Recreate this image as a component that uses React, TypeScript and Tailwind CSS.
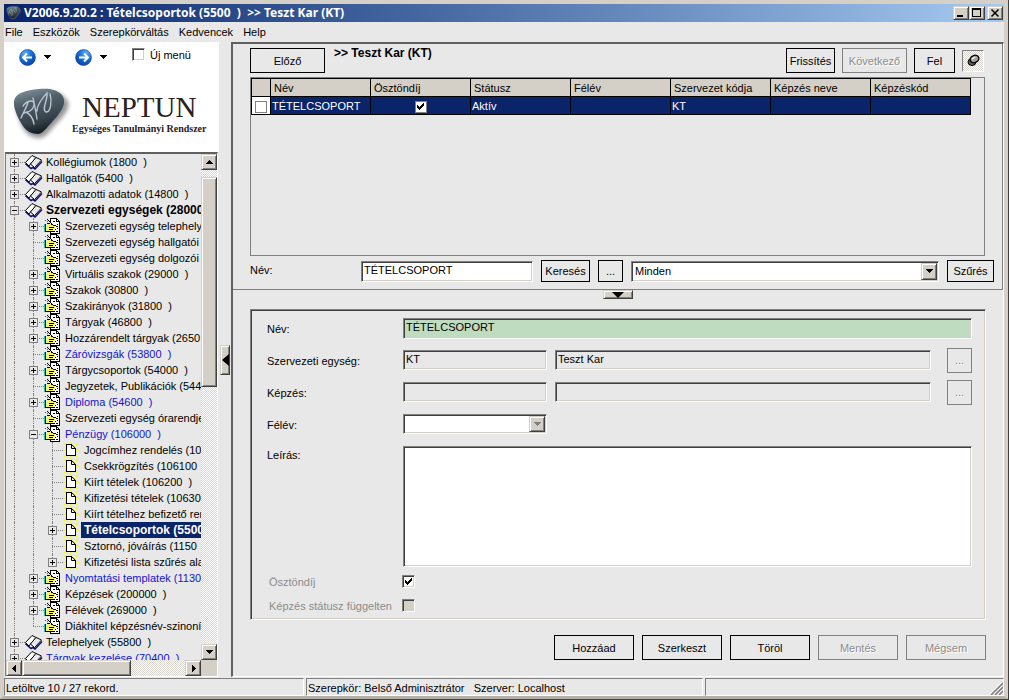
import type { ReactNode } from 'react';
import { clsx } from 'clsx';

type TreeIcon = 'book' | 'form' | 'page';

interface TreeRow {
  label: string;
  level: 0 | 1 | 2;
  toggle?: '+' | '-';
  blue?: boolean;
  bold?: boolean;
  selected?: boolean;
  last?: boolean; // last child of its branch
}

const treeRows: TreeRow[] = [
  { label: 'Kollégiumok (1800  )', level: 0, toggle: '+' },
  { label: 'Hallgatók (5400  )', level: 0, toggle: '+' },
  { label: 'Alkalmazotti adatok (14800  )', level: 0, toggle: '+' },
  { label: 'Szervezeti egységek (28000  )', level: 0, toggle: '-', bold: true },
  { label: 'Szervezeti egység telephelyei', level: 1, toggle: '+' },
  { label: 'Szervezeti egység hallgatói (29400  )', level: 1 },
  { label: 'Szervezeti egység dolgozói (28400  )', level: 1 },
  { label: 'Virtuális szakok (29000  )', level: 1, toggle: '+' },
  { label: 'Szakok (30800  )', level: 1, toggle: '+' },
  { label: 'Szakirányok (31800  )', level: 1, toggle: '+' },
  { label: 'Tárgyak (46800  )', level: 1, toggle: '+' },
  { label: 'Hozzárendelt tárgyak (2650', level: 1, toggle: '+' },
  { label: 'Záróvizsgák (53800  )', level: 1, blue: true },
  { label: 'Tárgycsoportok (54000  )', level: 1, toggle: '+' },
  { label: 'Jegyzetek, Publikációk (54400  )', level: 1 },
  { label: 'Diploma (54600  )', level: 1, toggle: '+', blue: true },
  { label: 'Szervezeti egység órarendje', level: 1 },
  { label: 'Pénzügy (106000  )', level: 1, toggle: '-', blue: true },
  { label: 'Jogcímhez rendelés (106050  )', level: 2 },
  { label: 'Csekkrögzítés (106100', level: 2 },
  { label: 'Kiírt tételek (106200  )', level: 2 },
  { label: 'Kifizetési tételek (106300  )', level: 2 },
  { label: 'Kiírt tételhez befizető rendelése', level: 2 },
  { label: 'Tételcsoportok (5500  )', level: 2, toggle: '+', bold: true, selected: true },
  { label: 'Sztornó, jóváírás (1150', level: 2 },
  { label: 'Kifizetési lista szűrés alapján', level: 2, toggle: '+', last: true },
  { label: 'Nyomtatási templatek (113000  )', level: 1, toggle: '+', blue: true },
  { label: 'Képzések (200000  )', level: 1, toggle: '+' },
  { label: 'Félévek (269000  )', level: 1, toggle: '+' },
  { label: 'Diákhitel képzésnév-szinonímák', level: 1, last: true },
  { label: 'Telephelyek (55800  )', level: 0, toggle: '+' },
  { label: 'Tárgyak kezelése (70400  )', level: 0, toggle: '+', blue: true },
];

const iconByLevel: TreeIcon[] = ['book', 'form', 'page'];
const columns = ['Név', 'Ösztöndíj', 'Státusz', 'Félév', 'Szervezet kódja', 'Képzés neve', 'Képzéskód'];
const menus = ['File', 'Eszközök', 'Szerepkörváltás', 'Kedvencek', 'Help'];

const sunken =
  'border border-t-[#808080] border-l-[#808080] border-r-white border-b-white shadow-[inset_1px_1px_0_#404040,inset_-1px_-1px_0_#d4d0c8]';
const raised =
  'bg-[#d4d0c8] border border-t-[#d4d0c8] border-l-[#d4d0c8] border-r-[#404040] border-b-[#404040] shadow-[inset_1px_1px_0_#fff,inset_-1px_-1px_0_#808080]';
const checker = 'bg-[repeating-conic-gradient(#ffffff_0_25%,#d9d6cf_0_50%)] bg-[length:2px_2px]';

/* ─── Icons ─────────────────────────────────────────────────────────── */

function Arrow({ dir, className }: { dir: 'up' | 'down' | 'left' | 'right'; className?: string }) {
  const paths = {
    up: 'M0 5h7v-1h-1v-1h-1v-1h-1v-1h-1v1h-1v1h-1v1h-1z',
    down: 'M0 1h7v1h-1v1h-1v1h-1v1h-1v-1h-1v-1h-1v-1h-1z',
    left: 'M5 0v7h-1v-1h-1v-1h-1v-1h-1v-1h1v-1h1v-1h1v-1z',
    right: 'M2 0v7h1v-1h1v-1h1v-1h1v-1h-1v-1h-1v-1h-1v-1z',
  };
  return (
    <svg width="7" height="7" viewBox="0 0 7 7" fill="currentColor" shapeRendering="crispEdges" className={className}>
      <path d={paths[dir]} />
    </svg>
  );
}

function NavCircle({ flip }: { flip?: boolean }) {
  return (
    <svg width="17" height="17" viewBox="0 0 17 17" className={clsx(flip && '-scale-x-100')}>
      <defs>
        <radialGradient id="ball" cx="0.35" cy="0.25" r="0.8">
          <stop offset="0" stopColor="#5fb0f5" />
          <stop offset="0.55" stopColor="#1568d2" />
          <stop offset="1" stopColor="#0b3f9c" />
        </radialGradient>
      </defs>
      <circle cx="8.5" cy="8.5" r="8" fill="url(#ball)" stroke="#1c4f9f" strokeWidth="0.6" />
      <path d="M13 8.500H4.500M8 4.500l-4 4 4 4" fill="none" stroke="#fff" strokeWidth="2" />
    </svg>
  );
}

function Stone({ size }: { size: number }) {
  return (
    <svg width={size} height={size} viewBox="0 0 60 60" className="shrink-0">
      <defs>
        <linearGradient id="stone" x1="0.3" y1="0" x2="0.6" y2="1">
          <stop offset="0" stopColor="#7c8d99" />
          <stop offset="0.3" stopColor="#4f5f6a" />
          <stop offset="0.7" stopColor="#36424b" />
          <stop offset="1" stopColor="#10161a" />
        </linearGradient>
        <filter id="soft" x="-20%" y="-20%" width="140%" height="140%">
          <feGaussianBlur stdDeviation="2" />
        </filter>
      </defs>
      <path
        d="M5 22C8 10 20 9 32 8s20 2 24 10c2 7-5 15-13 23-6 7-10 13-16 13-8 0-14-5-18-14-2-6-5-12-4-18z"
        fill="#666"
        opacity="0.7"
        filter="url(#soft)"
      />
      <path
        d="M2 17C3 9 14 6 27 5c9-1 17 0 22 5 4 4 4 9 1 15-3 5-6 9-10 13-5 5-8 11-14 12-6 0-12-3-15-8C7 36 1 25 2 17z"
        fill="url(#stone)"
      />
      <path
        d="M9 34c2-5 6-11 7-16M11 22c4-6 12-7 11-1s-6 7-10 8M14 28c4 2 7 6 8 12M21 14c2 8 3 15 4 21M25 27c0-6 6-14 10-18 1 7-6 17-1 19 5 1 6-12 4-18"
        fill="none"
        stroke="#b9c3ca"
        strokeWidth="1.4"
        strokeLinecap="round"
      />
    </svg>
  );
}

function NodeIcon({ kind }: { kind: TreeIcon }) {
  if (kind === 'book') {
    return (
      <svg width="18" height="16" viewBox="0 0 18 16" className="shrink-0">
        <path d="M0.500 9.500L6 14.500l2-1 2 1.500L17 7.500" fill="none" stroke="#14146e" strokeWidth="1.600" />
        <path d="M0.500 8.500L7 1.500l4 2L5.500 10 4 12z" fill="#fff" stroke="#000" />
        <path d="M5.500 10L11 3.500l5.500 2.500L9.500 13.500z" fill="#fff" stroke="#000" />
        <path d="M7.500 10l5-5M9.500 11l5-5" stroke="#b0b0b0" strokeWidth="0.700" />
      </svg>
    );
  }
  if (kind === 'form') {
    return (
      <svg width="18" height="16" viewBox="0 0 18 16" shapeRendering="crispEdges" className="shrink-0">
        <path d="M6.500 .5h6l3 3v12h-9z" fill="#fff" stroke="#000" />
        <path d="M12.500 0v3.500h3" fill="none" stroke="#000" />
        <path d="M9 3.500h2M13 6.500h1M12 8.500h2M13 10.500h1M9 13.500h2M12 13.500h2M11 11.500h1" stroke="#000" />
        <path d="M0 6h1v8H0z" fill="#00c8d8" />
        <path d="M1 7h2l2-2h2l4 3v3l-2 3H1z" fill="#f8f464" />
        <path d="M1.500 6v8M3 5.500h3M7 6.500h2M9 7.500h3M5 9.500h5M5 11.500h4M2 13.500h7" fill="none" stroke="#000" />
        <path d="M3 1h1v1h1v1h1v1h1v1h1v1h-1v-1h-1v-1h-1v-1h-1v-1h-1z" fill="#000" />
        <path d="M1 2h1v1H1zM3 3h1v1H3z" fill="#c03020" />
      </svg>
    );
  }
  return (
    <svg width="18" height="16" viewBox="0 0 18 16" className="shrink-0">
      <path d="M1 1l13 14M1 15L15 1M8 0v16M0 8h16" stroke="#f7f71c" strokeWidth="1.500" />
      <path d="M3.500 2.500h5l4 4v7h-9z" fill="#fff" stroke="#000" shapeRendering="crispEdges" />
      <path d="M8.500 2.500v4h4" fill="none" stroke="#000" />
    </svg>
  );
}

function Pin() {
  return (
    <svg width="13" height="13" viewBox="0 0 13 13">
      <ellipse cx="5" cy="8" rx="4" ry="3.5" fill="#606060" stroke="#000" />
      <ellipse cx="7.5" cy="5" rx="4.5" ry="3.5" fill="#a0a0a0" stroke="#000" strokeWidth="1.4" transform="rotate(-25 7.5 5)" />
      <path d="M5 5l3-2" stroke="#fff" strokeWidth="1.3" />
    </svg>
  );
}

/* ─── Controls ──────────────────────────────────────────────────────── */

function Button({ children, className, disabled }: { children: ReactNode; className: string; disabled?: boolean }) {
  return (
    <button
      type="button"
      disabled={disabled}
      className={clsx(
        'shrink-0 border text-center whitespace-nowrap',
        disabled ? 'border-[#808080] text-[#8c8c8c] [text-shadow:1px_1px_0_#fff]' : 'border-black',
        className,
      )}
    >
      {children}
    </button>
  );
}

interface CheckProps {
  id?: string;
  label?: string;
  checked?: boolean;
  disabled?: boolean;
  flat?: boolean;
}

function Check({ id, label, checked, disabled, flat }: CheckProps) {
  return (
    <span className="inline-grid shrink-0 place-items-center align-middle">
      <input
        id={id}
        type="checkbox"
        aria-label={label}
        defaultChecked={checked}
        disabled={disabled}
        className={clsx(
          'peer col-start-1 row-start-1 appearance-none',
          flat ? 'size-3 border border-[#808080]' : 'size-[13px]',
          !flat && sunken,
          disabled ? 'bg-[#d4d0c8]' : 'bg-white',
        )}
      />
      <svg
        width="7"
        height="7"
        viewBox="0 0 7 7"
        shapeRendering="crispEdges"
        className="pointer-events-none invisible col-start-1 row-start-1 peer-checked:visible"
      >
        <path d="M0 2v3h1v1h1v1h1v-1h1v-1h1v-1h1v-1h1v-3h-1v1h-1v1h-1v1h-1v1h-1v-1h-1v-1z" fill="#000" />
      </svg>
    </span>
  );
}

interface SelectProps {
  id?: string;
  label?: string;
  value: string;
  disabled?: boolean;
  className: string;
}

function Select({ id, label, value, disabled, className }: SelectProps) {
  return (
    <span className={clsx('relative block', className)}>
      <select
        id={id}
        aria-label={label}
        disabled={disabled}
        className={clsx('h-full w-full appearance-none bg-white pr-5 pl-[3px] opacity-100', sunken)}
      >
        <option>{value}</option>
      </select>
      <span
        className={clsx(
          'pointer-events-none absolute inset-y-[2px] right-[2px] flex w-4 items-center justify-center',
          raised,
          disabled && 'text-[#808080]',
        )}
      >
        <Arrow dir="down" />
      </span>
    </span>
  );
}

function Field({ id, label, value = '', className }: { id?: string; label?: string; value?: string; className: string }) {
  return (
    <input
      id={id}
      type="text"
      aria-label={label}
      defaultValue={value}
      className={clsx('min-w-0 pb-[2px] pl-[2px] outline-none', sunken, className)}
    />
  );
}

/* ─── Left side ─────────────────────────────────────────────────────── */

function TreeItem({ row }: { row: TreeRow }) {
  return (
    <li className="flex h-4">
      {Array.from({ length: row.level }, (_, i) => (
        <span key={i} className="flex w-[19px] shrink-0 pl-2">
          <span className="border-l border-dotted border-[#808080]" />
        </span>
      ))}
      <span className="relative w-[19px] shrink-0">
        <span
          className={clsx(
            'absolute top-0 left-2 border-l border-dotted border-[#808080]',
            row.last ? 'h-2' : 'h-4',
          )}
        />
        <span className="absolute top-2 right-0 left-2 border-t border-dotted border-[#808080]" />
        {row.toggle && (
          <button
            type="button"
            aria-label={row.label}
            className="absolute top-1 left-1 size-[9px] border border-[#808080] bg-[#e8e8e8]"
          >
            <svg width="7" height="7" viewBox="0 0 7 7" shapeRendering="crispEdges">
              <path d={row.toggle === '+' ? 'M1 3h5v1H1zM3 1h1v5H3z' : 'M1 3h5v1H1z'} />
            </svg>
          </button>
        )}
      </span>
      <NodeIcon kind={iconByLevel[row.level]} />
      <a
        href="#"
        className={clsx(
          'grow pr-1 pl-[3px] leading-4 whitespace-pre',
          row.blue && 'text-[#1414d0]',
          row.bold && 'text-[12px] font-bold',
          row.selected && 'bg-[#0a246a] text-white',
        )}
      >
        {row.label}
      </a>
    </li>
  );
}

function ScrollButton({ dir }: { dir: 'up' | 'down' | 'left' | 'right' }) {
  return (
    <button
      type="button"
      aria-label={dir}
      className={clsx('flex size-4 shrink-0 items-center justify-center', raised)}
    >
      <Arrow dir={dir} />
    </button>
  );
}

function Sidebar() {
  return (
    <aside className="flex w-[215px] shrink-0 flex-col">
      <div className="bg-white pb-2">
        <div className="flex h-[30px] items-center pl-[15px]">
          <button type="button" aria-label="Vissza" className="flex items-center gap-2">
            <NavCircle />
            <Arrow dir="down" />
          </button>
          <button type="button" aria-label="Előre" className="ml-6 flex items-center gap-2">
            <NavCircle flip />
            <Arrow dir="down" />
          </button>
          <label className="ml-[25px] flex items-center gap-[5px] pb-[5px]">
            <Check />
            Új menü
          </label>
        </div>
        <div className="flex pt-3 pl-2">
          <Stone size={60} />
          <div className="pt-[9px] font-['Liberation_Serif',serif] whitespace-nowrap text-[#2a211c]">
            <p className="pl-[10px] text-[29px] leading-[29px]">NEPTUN</p>
            <p className="text-[10px] leading-[14px] font-bold">Egységes Tanulmányi Rendszer</p>
          </div>
        </div>
      </div>

      <div className="mx-px flex min-h-0 flex-1 flex-col border border-t-2 border-[#808080] border-t-[#606060] border-r-white border-b-white">
        <div className="flex min-h-0 flex-1">
          <ul className="min-w-0 flex-1 overflow-hidden">
            {treeRows.map((row) => (
              <TreeItem key={row.label} row={row} />
            ))}
          </ul>
          <div className={clsx('flex w-4 flex-col', checker)}>
            <ScrollButton dir="up" />
            <div className="flex-1 pt-[7px]">
              <div className={clsx('h-[45%]', raised)} />
            </div>
            <ScrollButton dir="down" />
          </div>
        </div>
        <div className="flex h-4 bg-[#d4d0c8] pr-4">
          <ScrollButton dir="left" />
          <div className={clsx('flex flex-1', checker)}>
            <div className={clsx('w-2/3', raised)} />
          </div>
          <ScrollButton dir="right" />
        </div>
      </div>
    </aside>
  );
}

/* ─── Right side ────────────────────────────────────────────────────── */

function RecordTable() {
  return (
    <div className="mr-[17px] min-h-0 flex-1 border border-[#808080]">
      <table className="w-[720px] table-fixed border-separate border-spacing-0 border-t border-l border-black">
        <colgroup>
          <col className="w-[19px]" />
          {columns.map((name) => (
            <col key={name} className="w-[100px]" />
          ))}
        </colgroup>
        <thead className="bg-[#d4d0c8]">
          <tr className="h-[18px]">
            <th className="border-r border-b border-black p-0" />
            {columns.map((name) => (
              <th key={name} className="border-r border-b border-black p-0 pl-[3px] text-left leading-4 font-normal">
                {name}
              </th>
            ))}
          </tr>
        </thead>
        <tbody className="bg-[#0a246a] text-white">
          <tr className="h-[18px]">
            <td className="border-r border-b border-black bg-white p-0 text-center leading-4">
              <Check flat label="Kijelölés" />
            </td>
            <td className="border-r border-b border-black p-0 pl-px leading-4">TÉTELCSOPORT</td>
            <td className="border-r border-b border-black p-0 text-center leading-4">
              <Check flat checked label="Ösztöndíj" />
            </td>
            <td className="border-r border-b border-black p-0 pl-px leading-4">Aktív</td>
            <td className="border-r border-b border-black p-0" />
            <td className="border-r border-b border-black p-0 pl-px leading-4">KT</td>
            <td className="border-r border-b border-black p-0" />
            <td className="border-r border-b border-black p-0" />
          </tr>
        </tbody>
      </table>
    </div>
  );
}

function ListPane() {
  return (
    <section className="flex min-h-0 flex-1 flex-col gap-1 border-r border-b border-[#808080] pt-1 pb-[7px] pl-[17px]">
      <div className="flex h-[25px] items-center gap-[7px] pr-[18px]">
        <Button className="h-[25px] w-[75px]">Előző</Button>
        <h1 className="grow self-start pl-[2px] text-[12px] leading-[10px] font-bold">&gt;&gt; Teszt Kar (KT)</h1>
        <Button className="h-[25px] w-[49px]">Frissítés</Button>
        <Button className="h-[25px] w-[65px]" disabled>
          Következő
        </Button>
        <Button className="h-[25px] w-[41px]">Fel</Button>
        <button
          type="button"
          aria-label="Rögzítés"
          className={clsx(
            'flex size-[22px] items-center justify-center border border-t-[#808080] border-l-[#808080] border-r-white border-b-white',
            checker,
          )}
        >
          <Pin />
        </button>
      </div>

      <RecordTable />

      <div className="flex h-[22px] items-center gap-2 pr-2">
        <label htmlFor="search" className="w-[103px] shrink-0 pb-[2px]">
          Név:
        </label>
        <Field id="search" value="TÉTELCSOPORT" className="h-[21px] w-[172px] shrink-0 bg-white" />
        <Button className="h-[22px] w-[49px]">Keresés</Button>
        <Button className="h-[22px] w-[25px]">...</Button>
        <Select label="Szűrő" value="Minden" className="h-[21px] flex-1" />
        <Button className="h-[22px] w-[47px]">Szűrés</Button>
      </div>
    </section>
  );
}

function DetailPane() {
  return (
    <section className="px-[17px] pb-4">
      <div className={clsx('flex flex-col gap-3 pt-2 pr-[13px] pb-[7px] pl-4', sunken)}>
        <div className="flex h-5 items-center">
          <label htmlFor="name" className="w-[136px] shrink-0 pt-px">
            Név:
          </label>
          <Field id="name" value="TÉTELCSOPORT" className="h-[21px] flex-1 bg-[#c0dcc0]" />
        </div>
        <div className="flex h-5 items-center gap-2">
          <label htmlFor="unit" className="w-32 shrink-0 pt-px">
            Szervezeti egység:
          </label>
          <Field id="unit" value="KT" className="h-5 w-36 bg-[#e8e8e8]" />
          <Field label="Szervezeti egység neve" value="Teszt Kar" className="mr-2 h-5 flex-1 bg-[#e8e8e8]" />
          <Button className="h-[25px] w-[25px]" disabled>
            ...
          </Button>
        </div>
        <div className="flex h-5 items-center gap-2">
          <label htmlFor="training" className="w-32 shrink-0 pt-px">
            Képzés:
          </label>
          <Field id="training" className="h-5 w-36 bg-[#e8e8e8]" />
          <Field label="Képzés neve" className="mr-2 h-5 flex-1 bg-[#e8e8e8]" />
          <Button className="h-[25px] w-[25px]" disabled>
            ...
          </Button>
        </div>
        <div className="flex h-5 items-center">
          <label htmlFor="term" className="w-[136px] shrink-0 pt-px">
            Félév:
          </label>
          <Select id="term" value="" disabled className="h-5 w-36" />
        </div>
        <div className="flex">
          <label htmlFor="description" className="w-[136px] shrink-0 pt-px">
            Leírás:
          </label>
          <textarea id="description" className={clsx('h-[121px] flex-1 resize-none bg-white outline-none', sunken)} />
        </div>
        <div className="-mt-1 flex flex-col gap-[11px] pl-[2px] text-[#8c8c8c]">
          <div className="flex h-[13px] items-center">
            <label htmlFor="grant" className="w-[133px]">
              Ösztöndíj
            </label>
            <Check id="grant" checked />
          </div>
          <div className="flex h-[13px] items-center">
            <label htmlFor="independent" className="w-[133px]">
              Képzés státusz függelten
            </label>
            <Check id="independent" disabled />
          </div>
        </div>
      </div>
      <div className="flex justify-end gap-2 pt-[15px]">
        <Button className="h-[25px] w-20">Hozzáad</Button>
        <Button className="h-[25px] w-20">Szerkeszt</Button>
        <Button className="h-[25px] w-20">Töröl</Button>
        <Button className="h-[25px] w-20" disabled>
          Mentés
        </Button>
        <Button className="h-[25px] w-20" disabled>
          Mégsem
        </Button>
      </div>
    </section>
  );
}

/* ─── Window ────────────────────────────────────────────────────────── */

function TitleBar() {
  return (
    <header className="flex h-[18px] shrink-0 items-center bg-linear-to-r from-[#0a246a] to-[#a6caf0] pr-px pl-[2px] text-white">
      <Stone size={16} />
      <span className="grow pl-[2px] font-['Noto_Sans',sans-serif] text-[12px] font-bold whitespace-pre">
        {'V2006.9.20.2 : Tételcsoportok (5500  )  >> Teszt Kar (KT)'}
      </span>
      <button type="button" aria-label="Kis méret" className={clsx('h-[14px] w-4 text-black', raised)}>
        <svg width="14" height="12" viewBox="0 0 14 12" shapeRendering="crispEdges">
          <path d="M3 8h6v2H3z" />
        </svg>
      </button>
      <button type="button" aria-label="Teljes méret" className={clsx('h-[14px] w-4 text-black', raised)}>
        <svg width="14" height="12" viewBox="0 0 14 12" shapeRendering="crispEdges">
          <path d="M2 1h9v9H2zM3 3v6h7V3z" fillRule="evenodd" />
        </svg>
      </button>
      <button type="button" aria-label="Bezárás" className={clsx('ml-[2px] h-[14px] w-4 text-black', raised)}>
        <svg width="14" height="12" viewBox="0 0 14 12">
          <path d="M3.500 2.500l7 7M10.500 2.500l-7 7" stroke="#000" strokeWidth="1.6" />
        </svg>
      </button>
    </header>
  );
}

export default function App() {
  return (
    <div className="h-screen border-r border-b border-[#404040] font-['Liberation_Sans',Arial,sans-serif] text-[11px] leading-4 text-black">
      <div className="flex h-full flex-col overflow-hidden border-4 border-b-[3px] border-[#d4d0c8] border-b-[#b4b0a8] bg-[#e8e8e8]">
        <TitleBar />
        <nav className="flex h-5 shrink-0 items-center gap-[10px] pl-px">
          {menus.map((name) => (
            <button key={name} type="button">
              {name}
            </button>
          ))}
        </nav>

        <div className="flex min-h-0 flex-1">
          <Sidebar />
          <div className="flex w-3 shrink-0 items-center justify-center">
            <button
              type="button"
              aria-label="Menü elrejtése"
              className={clsx('flex h-[30px] w-[10px] items-center justify-center', raised)}
            >
              <svg width="7" height="12" viewBox="0 0 7 12">
                <path d="M7 0v12L0 6z" />
              </svg>
            </button>
          </div>
          <main className="flex min-w-0 flex-1 flex-col border-t-2 border-r border-b border-l-2 border-[#606060] border-r-white border-b-white">
            <ListPane />
            <div className="flex h-[19px] shrink-0 items-start justify-center">
              <button
                type="button"
                aria-label="Lista elrejtése"
                className={clsx('flex h-[9px] w-[30px] items-center justify-center', raised)}
              >
                <svg width="12" height="6" viewBox="0 0 12 6">
                  <path d="M0 0h12L6 6z" />
                </svg>
              </button>
            </div>
            <DetailPane />
          </main>
        </div>

        <footer className="mt-px flex h-[18px] shrink-0 gap-[2px] leading-[18px]">
          <p className="w-[300px] border border-t-[#808080] border-l-[#808080] border-r-white border-b-white pl-px">
            Letöltve 10 / 27 rekord.
          </p>
          <p className="w-[397px] border border-t-[#808080] border-l-[#808080] border-r-white border-b-white pl-px whitespace-pre">
            {'Szerepkör: Belső Adminisztrátor   Szerver: Localhost'}
          </p>
          <div className="flex flex-1 items-end justify-end border border-t-[#808080] border-l-[#808080] border-r-white border-b-white">
            <svg width="13" height="13" viewBox="0 0 13 13">
              <path d="M1 13L13 1M5 13l8-8M9 13l4-4" stroke="#808080" strokeWidth="1.6" />
              <path d="M0 12L12 0M4 12l8-8M8 12l4-4" stroke="#fff" />
            </svg>
          </div>
        </footer>
      </div>
    </div>
  );
}
